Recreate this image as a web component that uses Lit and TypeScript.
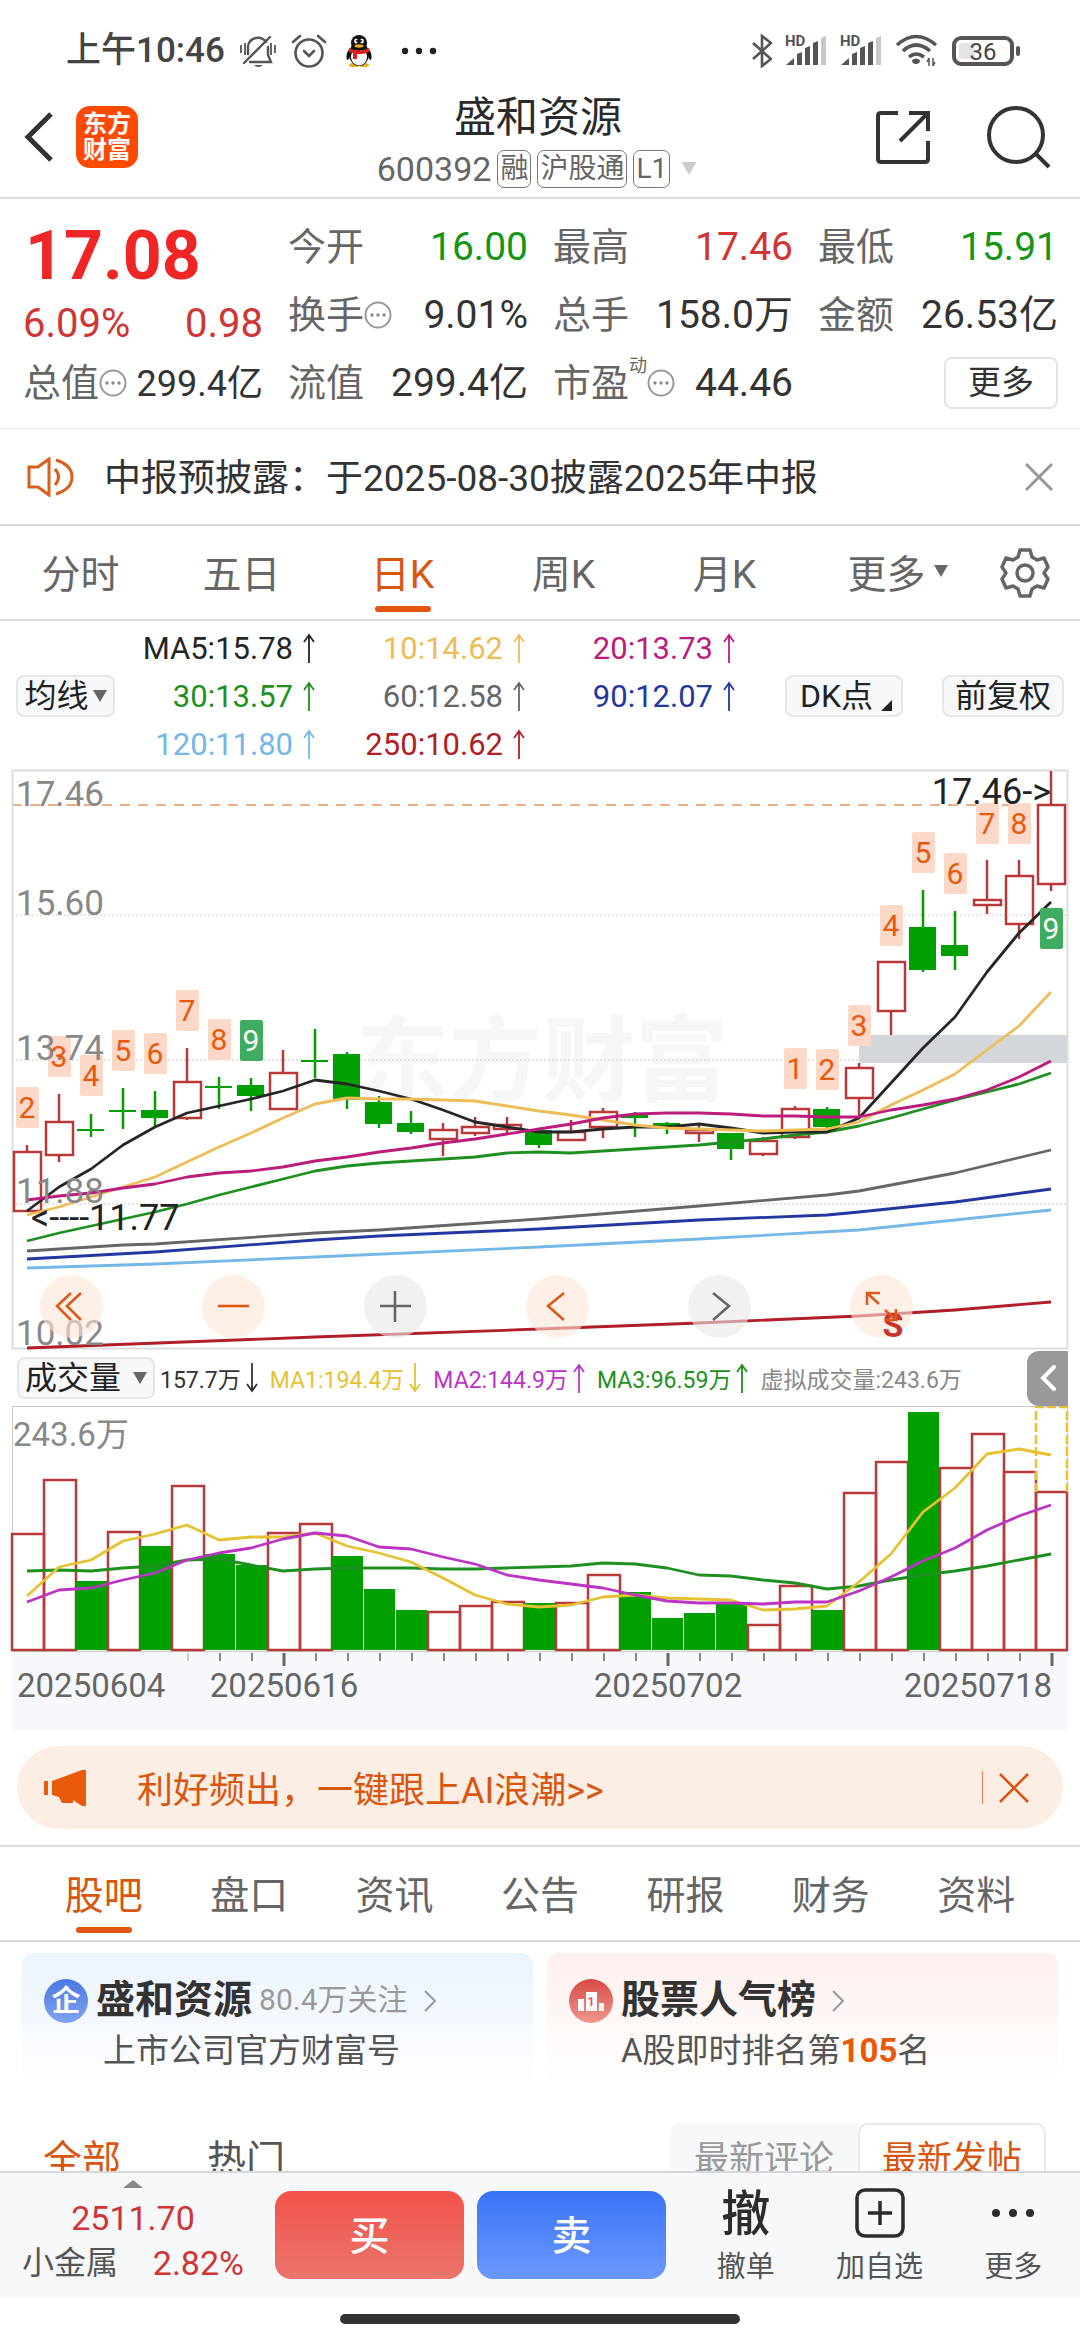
import { LitElement, html, css, svg } from "lit";
import { customElement } from "lit/decorators.js";
import { classMap } from "lit/directives/class-map.js";

const RED = "#b83a38";
const GREEN = "#00a000";
const STEP = 32;
const cx = (i: number) => 27 + i * STEP;

// Candles: colour, then high, body top, body bottom and low in plot units.
type Candle = ["r" | "g", number, number, number, number];
const candles: Candle[] = [
  ["r", 1145, 1152, 1211, 1211], ["r", 1094, 1122, 1155, 1162], ["g", 1114, 1129, 1131, 1137],
  ["g", 1088, 1110, 1112, 1129], ["g", 1091, 1110, 1118, 1126], ["r", 1048, 1082, 1118, 1120],
  ["g", 1077, 1086, 1088, 1109], ["g", 1078, 1085, 1096, 1111], ["r", 1050, 1073, 1109, 1109],
  ["g", 1029, 1060, 1062, 1078], ["g", 1052, 1054, 1100, 1109], ["g", 1096, 1102, 1124, 1128],
  ["g", 1111, 1123, 1132, 1134], ["r", 1123, 1130, 1139, 1156], ["r", 1117, 1127, 1133, 1136],
  ["r", 1117, 1125, 1129, 1133], ["g", 1130, 1130, 1145, 1148], ["r", 1120, 1132, 1140, 1140],
  ["r", 1108, 1112, 1127, 1138], ["g", 1112, 1114, 1118, 1137], ["g", 1122, 1123, 1126, 1134],
  ["r", 1125, 1130, 1133, 1142], ["g", 1133, 1133, 1149, 1160], ["r", 1137, 1141, 1154, 1156],
  ["r", 1106, 1109, 1137, 1139], ["g", 1107, 1109, 1127, 1129], ["r", 1063, 1068, 1098, 1118],
  ["r", 962, 962, 1011, 1035], ["g", 890, 927, 970, 972], ["g", 911, 945, 956, 970],
  ["r", 860, 900, 905, 914], ["r", 860, 876, 924, 939], ["r", 771, 805, 884, 891],
];

// Sequence counters beside the candles: index, digit, top edge.
const marks: [number, string, number][] = [
  [0, "2", 1087], [1, "3", 1036], [2, "4", 1055], [3, "5", 1030], [4, "6", 1033], [5, "7", 990],
  [6, "8", 1019], [7, "9", 1020], [24, "1", 1048], [25, "2", 1049], [26, "3", 1005], [27, "4", 905],
  [28, "5", 832], [29, "6", 853], [30, "7", 803], [31, "8", 803], [32, "9", 908],
];

const daily = (ys: number[]) => ys.map((y, i) => `${cx(i)},${y}`).join(" ");
const sparse = (ps: [number, number][]) => ps.map(([i, y]) => `${cx(i)},${y}`).join(" ");

const priceLines: [string, string][] = [
  ["#b01e28", sparse([[0, 1348], [9, 1337], [16, 1329], [21, 1323], [26, 1316], [29, 1310], [32, 1302]])],
  ["#74b8e8", sparse([[0, 1268], [4, 1264], [9, 1257], [16, 1247], [21, 1239], [26, 1230], [29, 1220], [32, 1210]])],
  ["#2238a0", sparse([[0, 1259], [4, 1252], [9, 1240], [11, 1236], [16, 1229], [21, 1220], [25, 1215], [26, 1212], [29, 1202], [32, 1189]])],
  ["#666", sparse([[0, 1251], [3, 1245], [4, 1244], [9, 1233], [11, 1230], [16, 1219], [21, 1206], [25, 1195], [26, 1191], [29, 1173], [32, 1150]])],
  ["#1e9020", daily([1241, 1233, 1226, 1219, 1212, 1204, 1195, 1187, 1179, 1171, 1166, 1163, 1161, 1159, 1157, 1153, 1152, 1153, 1151, 1149, 1147, 1145, 1142, 1139, 1135, 1132, 1126, 1118, 1109, 1100, 1092, 1084, 1073])],
  ["#262626", daily([1211, 1187, 1169, 1145, 1127, 1113, 1106, 1099, 1091, 1080, 1084, 1091, 1099, 1110, 1122, 1127, 1132, 1132, 1129, 1127, 1127, 1124, 1128, 1133, 1132, 1132, 1118, 1083, 1048, 1017, 972, 933, 902])],
  ["#efbc58", daily([1215, 1207, 1197, 1187, 1177, 1162, 1147, 1133, 1118, 1104, 1098, 1099, 1099, 1100, 1101, 1106, 1111, 1115, 1120, 1125, 1128, 1129, 1130, 1131, 1130, 1129, 1122, 1105, 1090, 1074, 1050, 1026, 992])],
  ["#bc1c7c", daily([1200, 1196, 1193, 1188, 1184, 1177, 1173, 1171, 1167, 1161, 1157, 1152, 1148, 1143, 1139, 1134, 1129, 1124, 1118, 1114, 1113, 1113, 1114, 1116, 1116, 1117, 1117, 1110, 1105, 1099, 1090, 1077, 1061])],
];

const volumeTops = [1534, 1480, 1581, 1532, 1546, 1486, 1554, 1565, 1533, 1524, 1556, 1589, 1610, 1612, 1606, 1602, 1603, 1603, 1575, 1592, 1618, 1613, 1604, 1625, 1586, 1610, 1493, 1462, 1412, 1468, 1434, 1472, 1492];
const volumeRising = new Set([0, 1, 3, 5, 8, 9, 13, 14, 15, 17, 18, 23, 24, 26, 27, 29, 30, 31, 32]);

const volumeLines: [string, string][] = [
  ["#1e9020", daily([1571, 1570, 1571, 1568, 1566, 1560, 1559, 1565, 1571, 1569, 1568, 1568, 1568, 1569, 1569, 1568, 1567, 1566, 1563, 1564, 1568, 1575, 1576, 1580, 1583, 1589, 1586, 1580, 1575, 1571, 1566, 1560, 1554])],
  ["#e6c232", daily([1596, 1567, 1560, 1541, 1534, 1525, 1540, 1537, 1537, 1533, 1546, 1553, 1562, 1578, 1595, 1604, 1607, 1605, 1597, 1595, 1598, 1599, 1600, 1610, 1609, 1606, 1582, 1554, 1512, 1488, 1454, 1449, 1455])],
  ["#bc34c4", daily([1602, 1590, 1588, 1580, 1573, 1560, 1553, 1548, 1539, 1533, 1536, 1547, 1549, 1557, 1564, 1575, 1580, 1584, 1588, 1595, 1601, 1603, 1603, 1604, 1602, 1602, 1591, 1577, 1561, 1548, 1530, 1516, 1505])],
];

@customElement("price-chart")
class PriceChart extends LitElement {
  static styles = css`
    :host { display: block; position: relative; }
    .plot { display: block; width: 100%; height: auto; font-family: Roboto, "Noto Sans CJK SC", sans-serif; }
    .axis { font-size: 35px; fill: #888; }
    .note { font-size: 36px; fill: #222; }
    .mark { font-size: 30px; fill: #e8590c; text-anchor: middle; }
    .mark.done { fill: #fff; }
    .watermark { font-size: 93px; font-weight: 700; fill: #f6f6f6; }
    .signal { font-size: 34px; font-weight: 700; fill: #c8342c; stroke: none; text-anchor: middle; font-family: Roboto, sans-serif; }
    .controls { position: absolute; left: 40px; right: 167px; bottom: 12px; display: flex; justify-content: space-between; }
    .control { width: 63px; height: 63px; border: 0; padding: 0; border-radius: 50%; background: rgba(253, 228, 215, 0.6); color: #d95a1a; }
    .control.muted { background: rgba(232, 232, 232, 0.6); color: #666; }
    .control svg { display: block; width: 100%; height: 100%; overflow: visible; }
  `;

  private control(label: string, shape: unknown, muted = false) {
    return html`<button class=${classMap({ control: true, muted })} aria-label=${label}>
      <svg viewBox="0 0 63 63" fill="none" stroke="currentColor" stroke-width="2.6">${shape}</svg>
    </button>`;
  }

  render() {
    return html`
      <svg class="plot" viewBox="0 768 1080 582" role="img" aria-label="日K">
        <text class="watermark" x="356" y="1094">东方财富</text>
        ${[915, 1060, 1204].map((y) => svg`<path d="M12 ${y}H1067" stroke="#ccc" stroke-dasharray="2 2"/>`)}
        <path d="M12 805H1067" stroke="#eeb088" stroke-width="2" stroke-dasharray="10 8"/>
        <rect x="859" y="1035" width="208" height="28" fill="#d3d6da"/>
        <rect x="12.500" y="770.500" width="1055" height="578" fill="none" stroke="#ddd" stroke-width="2"/>
        ${candles.map(([k, hi, top, bottom, lo], i) =>
          k === "g"
            ? svg`<path d="M${cx(i)} ${hi}V${lo}" stroke=${GREEN} stroke-width="2.500"/>
                <rect x=${cx(i) - 14} y=${top} width="27" height=${bottom - top} fill=${GREEN}/>`
            : svg`<path d="M${cx(i)} ${hi}V${top}M${cx(i)} ${bottom}V${lo}" stroke=${RED} stroke-width="2.500"/>
                <rect x=${cx(i) - 13} y=${top} width="27" height=${bottom - top} fill="none" stroke=${RED} stroke-width="2.500"/>`
        )}
        ${priceLines.map(([color, points]) => svg`<polyline points=${points} fill="none" stroke=${color} stroke-width="2.800" stroke-linejoin="round"/>`)}
        ${marks.map(([i, d, y]) => svg`<rect x=${cx(i) - 11} y=${y} width="23" height="41" rx="2" fill=${d === "9" ? "#40ac60" : "#fcd8c8"}/>`)}
        <text class="axis" x="16" y="806">17.46</text>
        <text class="axis" x="16" y="915">15.60</text>
        <text class="axis" x="16" y="1060">13.74</text>
        <text class="axis" x="16" y="1203">11.88</text>
        <text class="axis" x="16" y="1345">10.02</text>
        ${marks.map(([i, d, y]) => svg`<text class=${d === "9" ? "mark done" : "mark"} x=${cx(i)} y=${y + 31}>${d}</text>`)}
        <text class="note" x="31" y="1230">&lt;----11.77</text>
        <text class="note" x="1051" y="804" text-anchor="end">17.46-&gt;</text>
      </svg>
      <div class="controls">
        ${this.control("最左", svg`<path d="M31 18L17 31L31 45M41 18L27 31L41 45"/>`)}
        ${this.control("缩小", svg`<path d="M16 31H47"/>`)}
        ${this.control("放大", svg`<path d="M16 31H47M31 16V47"/>`, true)}
        ${this.control("左移", svg`<path d="M38 18L22 31L38 45"/>`)}
        ${this.control("右移", svg`<path d="M25 18L41 31L25 45"/>`, true)}
        ${this.control("全屏", svg`<text class="signal" x="43" y="62">S</text><path d="M30 18H17V30M17 18L29 29M35 35L46 45M46 34V45H35"/>`)}
      </div>
    `;
  }
}

@customElement("volume-chart")
class VolumeChart extends LitElement {
  static styles = css`
    :host { display: block; }
    .plot { display: block; width: 100%; height: auto; font-family: Roboto, "Noto Sans CJK SC", sans-serif; }
    .peak { font-size: 33px; fill: #888; }
    .date { font-size: 33px; fill: #666; }
  `;

  render() {
    return html`
      <svg class="plot" viewBox="0 1406 1080 324" role="img" aria-label="成交量">
        <rect x="12" y="1651" width="1056" height="79" fill="#f7f8fb"/>
        <rect x="12.500" y="1406.500" width="1055" height="245" fill="none" stroke="#ccc"/>
        ${volumeTops.map((y, i) =>
          volumeRising.has(i)
            ? svg`<rect x=${cx(i) - 15} y=${y} width=${i === 32 ? 31 : 32} height=${1650 - y} fill="none" stroke=${RED} stroke-width="2.500"/>`
            : svg`<rect x=${cx(i) - 15} y=${y} width="31" height=${1650 - y} fill=${GREEN}/>`
        )}
        <path d="M1036 1492V1407H1067V1492" fill="none" stroke="#e6c232" stroke-width="2.500" stroke-dasharray="9 3"/>
        ${volumeLines.map(([color, points]) => svg`<polyline points=${points} fill="none" stroke=${color} stroke-width="2.800" stroke-linejoin="round"/>`)}
        ${Array.from({ length: 28 }, (_, k) => k + 5).map((i) =>
          i % 12 === 8
            ? svg`<path d="M${cx(i) + 1} 1653V1666" stroke="#666" stroke-width="3"/>`
            : svg`<path d="M${cx(i) + 1} 1653V1661" stroke=${i === 5 ? "#ccc" : "#888"} stroke-width="2"/>`
        )}
        <text class="peak" x="13" y="1446">243.6万</text>
        <text class="date" x="17" y="1697">20250604</text>
        <text class="date" x="284" y="1697" text-anchor="middle">20250616</text>
        <text class="date" x="668" y="1697" text-anchor="middle">20250702</text>
        <text class="date" x="1052" y="1697" text-anchor="end">20250718</text>
      </svg>
    `;
  }
}

const info = html`<svg class="info" viewBox="0 0 28 28" aria-hidden="true">
  <circle cx="14" cy="14" r="12.5" fill="none" stroke="#999" stroke-width="2"/>
  <g fill="#888"><circle cx="8" cy="14" r="1.700"/><circle cx="14" cy="14" r="1.700"/><circle cx="20" cy="14" r="1.700"/></g>
</svg>`;

const up = html`<svg class="arrow" viewBox="0 0 12 30" aria-label="升"><path d="M6 3V30M1 9L6 2L11 9" fill="none" stroke="currentColor" stroke-width="1.800"/></svg>`;
const down = html`<svg class="arrow" viewBox="0 0 12 30" aria-label="降"><path d="M6 0V27M1 21L6 28L11 21" fill="none" stroke="currentColor" stroke-width="1.800"/></svg>`;
const caret = html`<svg class="caret" viewBox="0 0 14 12" aria-hidden="true"><path d="M0 0H14L7 12Z" fill="currentColor"/></svg>`;

const signal = html`<svg class="signal" viewBox="0 0 42 34" aria-label="HD">
  <g fill="#555"><path d="M1 31L9 24V31Z"/><path d="M12 20L17 18V31H12Z"/><path d="M20 14L25 12V31H20Z"/><path d="M28 9L33 7V31H28Z"/></g>
  <path d="M36 4L41 2V31H36Z" fill="#c8c8c8"/>
  <text class="hd" x="0" y="12">HD</text>
</svg>`;

@customElement("app-root")
class AppRoot extends LitElement {
  static styles = css`
    :host { display: block; font-family: Roboto, "Noto Sans CJK SC", sans-serif; color: #333; background: #fff; }
    * { box-sizing: border-box; }
    button { font: inherit; color: inherit; border: 0; padding: 0; background: none; white-space: nowrap; }
    a { color: inherit; text-decoration: none; }
    h1, h2, p { margin: 0; font-weight: 400; }
    svg { display: block; flex: none; }
    .page { height: 100vh; display: flex; flex-direction: column; overflow: hidden; }
    .red { color: #d03434; }
    .green { color: #149614; }

    .status { flex: none; display: flex; align-items: center; justify-content: space-between; height: 92px; padding: 9px 60px 0 66px; }
    .status-group { display: flex; align-items: center; gap: 15px; }
    .clock { font-size: 35px; font-weight: 500; line-height: 40px; color: #444; }
    .radio { gap: 13px; }
    .hd { font-size: 15px; font-weight: 700; fill: #555; }
    .signal { width: 42px; height: 34px; overflow: visible; }
    .level { font-size: 24px; fill: #444; text-anchor: middle; }

    .header { flex: none; display: flex; align-items: center; height: 107px; padding: 0 28px 2px 24px; border-bottom: 2px solid #dadada; }
    .side { flex: 1; display: flex; align-items: center; gap: 22px; padding-bottom: 14px; }
    .side.end { justify-content: flex-end; gap: 56px; }
    .logo { display: grid; place-content: center; width: 62px; height: 62px; border-radius: 14px; background: #ff4a04; color: #fff; font-size: 24px; line-height: 26px; font-weight: 700; text-align: center; }
    .title { font-size: 42px; line-height: 50px; text-align: center; color: #2a2a2a; }
    .tags { display: flex; align-items: center; justify-content: center; gap: 6px; height: 52px; font-size: 34px; color: #666; }
    .tag { border: 1px solid #777; border-radius: 7px; padding: 0 2px; font-size: 28px; line-height: 36px; }
    .tags .caret { width: 20px; height: 13px; margin-left: 3px; color: #ccc; }

    .quote { flex: none; display: grid; grid-template-columns: repeat(4, 1fr); grid-template-rows: repeat(3, 68px); column-gap: 25px; padding: 14px 22px 11px 23px; border-bottom: 1px solid #e6e6e6; font-size: 39px; }
    .last { grid-row: span 2; }
    .price { font-size: 68px; line-height: 86px; font-weight: 700; color: #f02626; padding-left: 2px; }
    .change { display: flex; justify-content: space-between; font-size: 40px; line-height: 50px; }
    .stat { display: flex; align-items: baseline; justify-content: space-between; line-height: 68px; white-space: nowrap; }
    .name { display: flex; align-items: center; font-size: 38px; color: #666; }
    .small { font-size: 36px; }
    .info { width: 28px; height: 28px; }
    .sup { align-self: flex-start; padding-top: 6px; font-size: 18px; line-height: 22px; }
    .more-cell { display: flex; align-items: center; justify-content: flex-end; }
    .more { width: 114px; height: 52px; border: 2px solid #e4e4e4; border-radius: 8px; font-size: 33px; line-height: 44px; }

    .notice { flex: none; display: flex; align-items: center; height: 97px; padding: 0 27px; gap: 29px; border-bottom: 2px solid #dadada; font-size: 37px; }
    .notice p { flex: 1; padding-bottom: 4px; }

    .periods, .sections { flex: none; display: flex; height: 95px; border-bottom: 2px solid #dadada; font-size: 39px; color: #666; }
    .periods { padding-right: 30px; align-items: center; }
    .sections { padding: 0 31px; border-top: 2px solid #dadada; height: 97px; }
    .tab { position: relative; flex: 1; height: 93px; padding-bottom: 3px; }
    .tab.active { color: #d9560f; }
    .tab.active::after { content: ""; position: absolute; left: 50%; bottom: 7px; width: 56px; margin-left: -28px; height: 6px; border-radius: 3px; background: #e0560e; }
    .tab.drop { display: flex; align-items: center; justify-content: center; gap: 8px; padding-left: 12px; }
    .gear { width: 50px; margin-left: 22px; }

    .legend { flex: none; display: flex; align-items: center; padding: 3px 16px 0; }
    .chip { display: flex; align-items: center; justify-content: center; gap: 4px; height: 42px; border: 2px solid #e4e6ea; border-radius: 8px; background: #f7f8fa; font-size: 32px; line-height: 36px; color: #222; }
    .chip .caret { color: #666; }
    .caret { width: 14px; height: 12px; }
    .average { width: 99px; }
    .adjust { width: 122px; }
    .dk { width: 118px; }
    .corner { width: 11px; height: 11px; align-self: flex-end; margin: 0 -4px 4px 4px; }
    .values { display: grid; grid-template-columns: 200px 210px 210px; grid-auto-rows: 48px; flex: 1; font-size: 31px; }
    .value { display: flex; align-items: center; justify-content: flex-end; gap: 10px; }
    .arrow { width: 12px; height: 30px; }
    .chips { display: flex; gap: 39px; }
    .ma5 { color: #262626; } .ma10 { color: #efbc58; } .ma20 { color: #bc1c7c; } .ma30 { color: #1e9020; }
    .ma60 { color: #666; } .ma90 { color: #2238a0; } .ma120 { color: #74b8e8; } .ma250 { color: #b01e28; }

    .volume-bar { flex: none; display: flex; align-items: center; height: 56px; padding: 0 12px 0 17px; }
    .volume-pick { width: 138px; gap: 12px; margin-right: 5px; }
    .figures { flex: 1; display: flex; align-items: center; gap: 12px; font-size: 23px; white-space: nowrap; }
    .figure { display: flex; align-items: center; gap: 5px; }
    .v1 { color: #e6c232; } .v2 { color: #bc34c4; } .v3 { color: #1e9020; } .virtual { color: #888; }
    .fold { display: grid; place-content: center; width: 41px; height: 55px; border-radius: 12px 0 0 12px; background: #999; }

    .promo { flex: none; display: flex; align-items: center; height: 83px; margin: 16px 17px; padding: 0 34px 0 27px; border-radius: 42px; background: #fceee5; color: #d9560f; font-size: 36px; }
    .promo a { flex: 1; margin-left: 49px; padding-bottom: 2px; }
    .bar { width: 1px; height: 33px; margin-right: 16px; background: #e08050; }

    .feed { flex: 1; min-height: 0; overflow: hidden; }
    .cards { display: grid; grid-template-columns: 1fr 1fr; gap: 14px; margin: 11px 22px 0; }
    .card { display: block; height: 134px; padding: 23px 22px 0; border-radius: 12px; background: linear-gradient(#ebf4fe, #f7faff 60%, #fff); }
    .card.hot { background: linear-gradient(#fef0ee, #fff9f8 60%, #fff); }
    .card-head { display: flex; align-items: center; gap: 7px; height: 50px; line-height: 48px; }
    .card-head h2 { height: 50px; font-size: 39px; font-weight: 700; white-space: nowrap; }
    .fans { height: 50px; font-size: 30px; color: #999; white-space: nowrap; }
    .chev { margin-left: 9px; }
    .badge { width: 45px; height: 45px; }
    .glyph { font-size: 29px; font-weight: 700; fill: #fff; text-anchor: middle; }
    .rank { font-size: 13px; font-weight: 700; fill: #e4605c; text-anchor: middle; }
    .card p { padding-left: 59px; font-size: 33px; line-height: 50px; color: #555; white-space: nowrap; }
    .card.hot p { padding-left: 52px; }
    .card strong { color: #e8590c; font-weight: 700; }
    .filters { display: flex; align-items: center; margin-top: 36px; padding: 0 34px 0 43px; gap: 86px; font-size: 39px; line-height: 52px; color: #555; }
    .filters .on { color: #d9560f; }
    .segments { display: flex; margin-left: auto; height: 74px; border-radius: 10px; background: #f7f8fa; font-size: 35px; color: #999; }
    .segment { width: 188px; }
    .segment.on { border: 2px solid #e8e9eb; border-radius: 10px; background: #fff; }

    .dock { flex: none; display: flex; align-items: center; height: 126px; border-top: 2px solid #d5d7da; background: #f7f8fa; }
    .index { display: flex; flex-direction: column; justify-content: flex-start; width: 254px; height: 124px; margin-right: 21px; padding: 7px 10px 0 22px; text-align: center; font-size: 34px; }
    .index svg { align-self: center; }
    .index-value { line-height: 60px; }
    .index-row { display: flex; justify-content: space-between; line-height: 30px; }
    .index-row span:first-child { font-size: 32px; color: #555; }
    .trade { flex: 1; max-width: 189px; height: 88px; margin-right: 13px; padding-bottom: 4px; border-radius: 16px; color: #fff; font-size: 40px; font-weight: 500; }
    .buy { background: linear-gradient(#f2524a, #ea756c); }
    .sell { background: linear-gradient(#3a74f6, #6c98fc); }
    .tools { flex: 1; display: flex; padding-top: 4px; }
    .tool { flex: 1; display: flex; flex-direction: column; align-items: center; gap: 8px; font-size: 29px; line-height: 40px; color: #555; }
    .tool-icon { display: grid; place-items: center; height: 52px; font-size: 49px; line-height: 56px; font-weight: 500; color: #2c2c2c; }
    .home { flex: none; display: flex; justify-content: center; height: 43px; padding-top: 17px; }
    .home i { width: 37%; height: 10px; border-radius: 5px; background: #333; }
  `;

  private stat(name: unknown, value: string, tone = "") {
    return html`<div class="stat"><span class="name">${name}</span><span class=${tone}>${value}</span></div>`;
  }

  private tabs(names: string[], active: string) {
    return names.map((n) => html`<button class=${classMap({ tab: true, active: n === active })}>${n}</button>`);
  }

  render() {
    const averages = [
      ["ma5", "MA5:15.78"], ["ma10", "10:14.62"], ["ma20", "20:13.73"], ["ma30", "30:13.57"],
      ["ma60", "60:12.58"], ["ma90", "90:12.07"], ["ma120", "120:11.80"], ["ma250", "250:10.62"],
    ];
    return html`
      <div class="page">
        <div class="status">
          <div class="status-group">
            <span class="clock">上午10:46</span>
            <svg width="36" height="34" viewBox="0 0 36 34" fill="none" stroke="#555" stroke-width="2.400">
              <path d="M8 20V12A10 10 0 0 1 26 8M28 13V21L31 28H10M4 29L30 3" stroke-linecap="round"/>
              <path d="M1 11V19M5 9V21M31 9V21M35 11V19" stroke-width="1.800"/>
              <path d="M14 31H23Q18 35 14 31Z" fill="#555" stroke="none"/>
            </svg>
            <svg width="36" height="34" viewBox="0 0 36 34" fill="none" stroke="#555" stroke-width="2.600" stroke-linecap="round">
              <circle cx="18" cy="19" r="13.500"/><path d="M13 17L18 22L23 17M2 8L9 2M34 8L27 2"/>
            </svg>
            <svg width="34" height="34" viewBox="0 0 34 34">
              <ellipse cx="12" cy="31" rx="5" ry="2" fill="#e8b020"/><ellipse cx="22" cy="31" rx="5" ry="2" fill="#e8b020"/>
              <path d="M8 14Q3 20 5 26Q7 26 8 22ZM26 14Q31 20 29 26Q27 26 26 22Z" fill="#111"/>
              <ellipse cx="17" cy="20" rx="10" ry="12" fill="#111"/><ellipse cx="17" cy="23" rx="8" ry="8.500" fill="#fff"/>
              <ellipse cx="17" cy="9" rx="8" ry="8" fill="#111"/>
              <ellipse cx="14" cy="7" rx="1.800" ry="2.500" fill="#fff"/><ellipse cx="20" cy="7" rx="1.800" ry="2.500" fill="#fff"/>
              <circle cx="15" cy="7" r="1"/><circle cx="19" cy="7" r="1"/>
              <ellipse cx="17" cy="12" rx="4.500" ry="1.700" fill="#f0a818"/>
              <path d="M7 14Q17 19 27 14V18Q20 21 15 20V25H11V19L7 18Z" fill="#e02020"/>
            </svg>
            <svg width="64" height="10" viewBox="0 0 64 10" fill="#222"><circle cx="14" cy="5" r="3.200"/><circle cx="28" cy="5" r="3.200"/><circle cx="42" cy="5" r="3.200"/></svg>
          </div>
          <div class="status-group radio">
            <svg width="20" height="34" viewBox="0 0 20 34" fill="none" stroke="#555" stroke-width="2.600"><path d="M1 9L19 25L10 32V2L19 9L1 25"/></svg>
            ${signal}${signal}
            <svg width="44" height="34" viewBox="0 0 44 34" fill="none" stroke="#555" stroke-width="3.600">
              <path d="M2 11Q21 -6 41 11M8 17Q21 5 35 17M14 23Q21 17 29 23"/><path d="M17 26Q21 23 25 26Q25 30 21 30Q17 30 17 26Z" fill="#555" stroke="none"/>
              <path d="M34 24V32M32 28L34 24M38 24V32L40 28" stroke-width="1.500"/>
            </svg>
            <svg width="68" height="30" viewBox="0 0 68 30"><rect x="7" y="7" width="16" height="16" rx="3" fill="#e4e4e4"/><rect x="2" y="2" width="58" height="26" rx="7" fill="none" stroke="#555" stroke-width="4"/><rect x="64" y="10" width="4" height="10" rx="2" fill="#555"/><text class="level" x="31" y="24">36</text></svg>
          </div>
        </div>

        <header class="header">
          <div class="side">
            <button aria-label="返回"><svg width="30" height="50" viewBox="0 0 30 50"><path d="M27 2L4 25L27 48" fill="none" stroke="#333" stroke-width="5"/></svg></button>
            <span class="logo">东方<br>财富</span>
          </div>
          <div>
            <h1 class="title">盛和资源</h1>
            <div class="tags">600392<span class="tag">融</span><span class="tag">沪股通</span><span class="tag">L1</span>${caret}</div>
          </div>
          <div class="side end">
            <button aria-label="分享"><svg width="54" height="54" viewBox="0 0 54 54" fill="none" stroke="#333" stroke-width="4"><path d="M22 3H5Q2 3 2 6V49Q2 52 5 52H49Q52 52 52 49V31M33 3H52V21M52 3L24 31"/></svg></button>
            <button aria-label="搜索"><svg width="66" height="64" viewBox="0 0 66 64" fill="none" stroke="#333" stroke-width="4"><circle cx="30" cy="30" r="27"/><path d="M50 49L63 62"/></svg></button>
          </div>
        </header>

        <section class="quote">
          <div class="last">
            <div class="price">17.08</div>
            <div class="change red"><span>6.09%</span><span>0.98</span></div>
          </div>
          ${this.stat("今开", "16.00", "green")}
          ${this.stat("最高", "17.46", "red")}
          ${this.stat("最低", "15.91", "green")}
          ${this.stat(html`换手${info}`, "9.01%")}
          ${this.stat("总手", "158.0万")}
          ${this.stat("金额", "26.53亿")}
          ${this.stat(html`总值${info}`, "299.4亿", "small")}
          ${this.stat("流值", "299.4亿")}
          ${this.stat(html`市盈<span class="sup">动</span>${info}`, "44.46")}
          <div class="more-cell"><button class="more">更多</button></div>
        </section>

        <div class="notice">
          <svg width="48" height="40" viewBox="0 0 48 40" fill="none" stroke="#d9601c" stroke-width="3"><path d="M2 10H11L22 2V38L11 30H2ZM28 12Q35 20 28 28"/><path d="M29 3Q45 8 45 20T29 37"/></svg>
          <p>中报预披露：于2025-08-30披露2025年中报</p>
          <button aria-label="关闭"><svg width="28" height="28" viewBox="0 0 28 28"><path d="M1 1L27 27M27 1L1 27" stroke="#999" stroke-width="3"/></svg></button>
        </div>

        <nav class="periods">
          ${this.tabs(["分时", "五日", "日K", "周K", "月K"], "日K")}
          <button class="tab drop">更多${caret}</button>
          <button class="gear" aria-label="设置"><svg width="50" height="50" viewBox="0 0 50 50" fill="none" stroke="#666" stroke-width="3.500" stroke-linejoin="round"><path d="M20 2H30L32 9L37 12L44 10L48 19L44 25L48 31L44 40L37 38L32 41L30 48H20L18 41L13 38L6 40L2 31L6 25L2 19L6 10L13 12L18 9Z"/><circle cx="25" cy="25" r="8"/></svg></button>
        </nav>

        <div class="legend">
          <button class="chip average">均线${caret}</button>
          <div class="values">
            ${averages.map(([c, t]) => html`<span class="value ${c}">${t}${up}</span>`)}
          </div>
          <div class="chips">
            <button class="chip dk">DK点<svg class="corner" viewBox="0 0 11 11"><path d="M11 0V11H0Z" fill="#222"/></svg></button>
            <button class="chip adjust">前复权</button>
          </div>
        </div>

        <price-chart></price-chart>

        <div class="volume-bar">
          <button class="chip volume-pick">成交量${caret}</button>
          <div class="figures">
            <span class="figure">157.7万${down}</span>
            <span class="figure v1">MA1:194.4万${down}</span>
            <span class="figure v2">MA2:144.9万${up}</span>
            <span class="figure v3">MA3:96.59万${up}</span>
            <span class="figure virtual">虚拟成交量:243.6万</span>
          </div>
          <button class="fold" aria-label="展开"><svg width="18" height="28" viewBox="0 0 18 28"><path d="M15 3L4 14L15 25" fill="none" stroke="#fff" stroke-width="4" stroke-linecap="round"/></svg></button>
        </div>

        <volume-chart></volume-chart>

        <div class="promo">
          <svg width="44" height="38" viewBox="0 0 44 38" fill="#e85a0a"><rect x="0" y="12" width="4" height="14"/><path d="M8 12L38 1H42V37H38L29 31V34H18L15 28L8 26Z"/></svg>
          <a href="#">利好频出，一键跟上AI浪潮&gt;&gt;</a>
          <span class="bar"></span>
          <button aria-label="关闭"><svg width="30" height="30" viewBox="0 0 30 30"><path d="M1 1L29 29M29 1L1 29" stroke="#d9560f" stroke-width="2.600"/></svg></button>
        </div>

        <nav class="sections">${this.tabs(["股吧", "盘口", "资讯", "公告", "研报", "财务", "资料"], "股吧")}</nav>

        <main class="feed">
          <div class="cards">
            <a class="card" href="#">
              <div class="card-head">
                <svg class="badge" viewBox="0 0 45 45"><defs><linearGradient id="blue" x2="0" y2="1"><stop stop-color="#4a78e4"/><stop offset="1" stop-color="#80a4f0"/></linearGradient></defs><circle cx="22" cy="22" r="22" fill="url(#blue)"/><text class="glyph" x="22" y="32">企</text></svg>
                <h2>盛和资源</h2><span class="fans">80.4万关注</span>
                <svg class="chev" width="13" height="22" viewBox="0 0 13 22"><path d="M1 1L11 11L1 21" fill="none" stroke="#999" stroke-width="2"/></svg>
              </div>
              <p>上市公司官方财富号</p>
            </a>
            <a class="card hot" href="#">
              <div class="card-head">
                <svg class="badge" viewBox="0 0 45 45"><defs><linearGradient id="pink" x2="0" y2="1"><stop stop-color="#d84a44"/><stop offset="1" stop-color="#f09890"/></linearGradient></defs><circle cx="22" cy="22" r="22" fill="url(#pink)"/><path d="M9 20H15V32H9ZM17 13H28V32H17ZM30 24H35V32H30Z" fill="#fff"/><text class="rank" x="22" y="27">1</text></svg>
                <h2>股票人气榜</h2>
                <svg class="chev" width="13" height="22" viewBox="0 0 13 22"><path d="M1 1L11 11L1 21" fill="none" stroke="#999" stroke-width="2"/></svg>
              </div>
              <p>A股即时排名第<strong>105</strong>名</p>
            </a>
          </div>
          <div class="filters">
            <button class="on">全部</button><button>热门</button>
            <div class="segments"><button class="segment">最新评论</button><button class="segment on">最新发帖</button></div>
          </div>
        </main>

        <footer class="dock">
          <button class="index red">
            <svg width="20" height="8" viewBox="0 0 20 8"><path d="M10 0L20 8H0Z" fill="#888"/></svg>
            <span class="index-value">2511.70</span>
            <span class="index-row"><span>小金属</span><span>2.82%</span></span>
          </button>
          <button class="trade buy">买</button>
          <button class="trade sell">卖</button>
          <div class="tools">
            <button class="tool"><span class="tool-icon">撤</span>撤单</button>
            <button class="tool"><span class="tool-icon"><svg width="50" height="50" viewBox="0 0 50 50" fill="none" stroke="#2c2c2c" stroke-width="3.500"><rect x="2" y="2" width="46" height="46" rx="8"/><path d="M25 13V37M13 25H37"/></svg></span>加自选</button>
            <button class="tool"><span class="tool-icon"><svg width="44" height="10" viewBox="0 0 44 10" fill="#2c2c2c"><circle cx="5" cy="5" r="4"/><circle cx="22" cy="5" r="4"/><circle cx="39" cy="5" r="4"/></svg></span>更多</button>
          </div>
        </footer>
        <div class="home"><i></i></div>
      </div>
    `;
  }
}
